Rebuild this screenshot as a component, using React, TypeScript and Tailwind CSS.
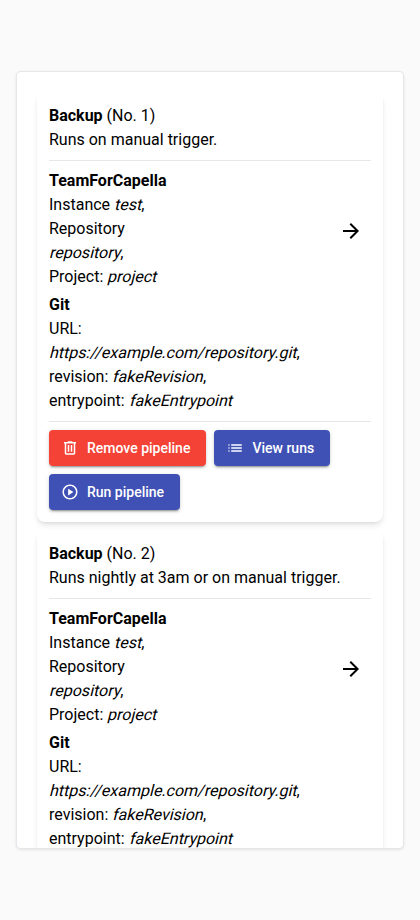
import React from "react";

const ICONS = {
  trash: "M7 21q-.825 0-1.412-.587T5 19V6H4V4h5V3h6v1h5v2h-1v13q0 .825-.587 1.413T17 21zM17 6H7v13h10zM9 17h2V8H9zm4 0h2V8h-2z",
  list: "M7 9V7h14v2zm0 4v-2h14v2zm0 4v-2h14v2zM4 9a1 1 0 1 1 0-2 1 1 0 0 1 0 2zm0 4a1 1 0 1 1 0-2 1 1 0 0 1 0 2zm0 4a1 1 0 1 1 0-2 1 1 0 0 1 0 2z",
  play: "M12 2C6.480 2 2 6.480 2 12s4.480 10 10 10 10-4.480 10-10S17.520 2 12 2zm0 18c-4.410 0-8-3.590-8-8s3.590-8 8-8 8 3.590 8 8-3.590 8-8 8zM9.500 16.500l7-4.500-7-4.500z",
  arrow: "M16.150 13H4v-2h12.150l-5.600-5.600L12 4l8 8-8 8-1.425-1.400z",
};

function Icon({ name, className }: { name: keyof typeof ICONS; className: string }) {
  return (
    <svg viewBox="0 0 24 24" fill="currentColor" fillRule="evenodd" className={className}>
      <path d={ICONS[name]} />
    </svg>
  );
}

function Slanted({ children }: { children: React.ReactNode }) {
  return <span className="inline-block origin-[0_17px] -skew-x-[14deg]">{children}</span>;
}

function Button({ icon, label, color }: { icon: keyof typeof ICONS; label: string; color: string }) {
  return (
    <button
      className={`flex h-9 items-center rounded pr-4 pl-3 text-sm font-medium whitespace-nowrap text-white shadow-[0_3px_1px_-2px_rgba(0,0,0,0.2),0_2px_2px_0_rgba(0,0,0,0.14),0_1px_5px_0_rgba(0,0,0,0.12)] ${color}`}
    >
      <Icon name={icon} className="mr-2 size-[18px]" />
      {label}
    </button>
  );
}

function Pipeline({ no, schedule }: { no: number; schedule: string }) {
  return (
    <section className="rounded-lg bg-white p-3 shadow-md">
      <div>
        <b>Backup</b> (No. {no})
      </div>
      <div>{schedule}</div>
      <hr className="my-2 border-gray-200" />
      <div className="flex items-center justify-between">
        <div className="pb-1">
          <b>TeamForCapella</b>
          <br />
          Instance <Slanted>test</Slanted>,<br />
          Repository
          <br />
          <Slanted>repository</Slanted>,<br />
          Project: <Slanted>project</Slanted>
        </div>
        <Icon name="arrow" className="mr-[8.5px] size-6" />
      </div>
      <div>
        <b>Git</b>
        <br />
        URL:
        <br />
        <Slanted>https://example.com/repository.git</Slanted>,<br />
        revision: <Slanted>fakeRevision</Slanted>,<br />
        entrypoint: <Slanted>fakeEntrypoint</Slanted>
      </div>
      <hr className="my-2 border-gray-200" />
      <div className="flex flex-wrap gap-2">
        <Button icon="trash" label="Remove pipeline" color="bg-[#f44336]" />
        <Button icon="list" label="View runs" color="bg-[#3f51b5]" />
        <Button icon="play" label="Run pipeline" color="bg-[#3f51b5]" />
      </div>
    </section>
  );
}

export default function App() {
  return (
    <main className="flex h-[920px] items-center justify-center bg-[#fafafa] font-['Roboto',sans-serif] text-base text-black">
      <div className="h-[776px] w-[386px] overflow-hidden rounded bg-white p-5 shadow-[0_0_0_1px_#e5e7eb,0_1px_3px_1px_rgba(0,0,0,0.1)]">
        <div className="flex flex-col gap-2">
          <Pipeline no={1} schedule="Runs on manual trigger." />
          <Pipeline no={2} schedule="Runs nightly at 3am or on manual trigger." />
        </div>
      </div>
    </main>
  );
}
